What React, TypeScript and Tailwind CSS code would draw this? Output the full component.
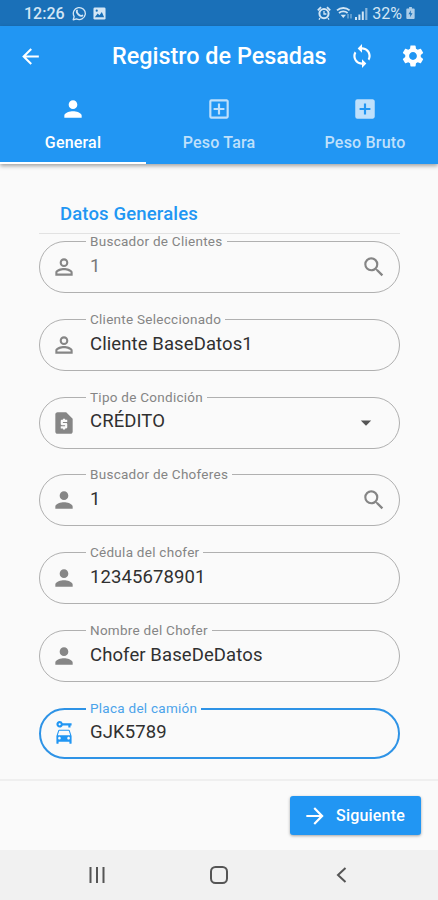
import type { IconType } from "react-icons";
import {
  MdAddBox,
  MdArrowBack,
  MdArrowDropDown,
  MdArrowForward,
  MdCarRental,
  MdOutlineAddBox,
  MdPerson,
  MdPersonOutline,
  MdRequestPage,
  MdSearch,
  MdSettings,
  MdSync,
} from "react-icons/md";

interface FieldProps {
  label: string;
  value: string;
  icon: IconType;
  trailing?: "search" | "dropdown";
  disabled?: boolean;
  focused?: boolean;
}

const fields: FieldProps[] = [
  { label: "Buscador de Clientes", value: "1", icon: MdPersonOutline, trailing: "search", disabled: true },
  { label: "Cliente Seleccionado", value: "Cliente BaseDatos1", icon: MdPersonOutline },
  { label: "Tipo de Condición", value: "CRÉDITO", icon: MdRequestPage, trailing: "dropdown" },
  { label: "Buscador de Choferes", value: "1", icon: MdPerson, trailing: "search" },
  { label: "Cédula del chofer", value: "12345678901", icon: MdPerson },
  { label: "Nombre del Chofer", value: "Chofer BaseDeDatos", icon: MdPerson },
  { label: "Placa del camión", value: "GJK5789", icon: MdCarRental, focused: true },
];

const tabs = [
  { label: "General", icon: MdPerson, active: true },
  { label: "Peso Tara", icon: MdOutlineAddBox, active: false },
  { label: "Peso Bruto", icon: MdAddBox, active: false },
];

function StatusBar() {
  return (
    <div className="flex h-[26px] items-center bg-[#1a70b8] pl-6 pr-[23px] text-[#d3e6f5]">
      <span className="pt-px text-[16px] font-medium leading-none">12:26</span>
      <svg className="ml-[7px] h-[15px] w-[15px]" viewBox="0 0 16 16" fill="none" stroke="currentColor">
        <path d="M1.3 14.7l1-3.4a6.4 6.4 0 112.5 2.4z" strokeWidth="1.4" strokeLinejoin="round" />
        <path d="M5.4 4.7c-.8 1.4 0 3 1.5 4.4 1.5 1.3 3 2 4.2 1.1" strokeWidth="1.9" strokeLinecap="round" />
      </svg>
      <svg className="ml-[6px] h-[13px] w-[13px]" viewBox="0 0 14 14">
        <rect x=".5" y=".5" width="13" height="13" rx="1.5" fill="currentColor" />
        <path d="M2 11l3-4 2 2 2.5-3.5L12 11z" fill="#1a70b8" />
        <circle cx="4" cy="4" r="1.2" fill="#1a70b8" />
      </svg>
      <svg className="ml-auto h-[14px] w-[14px]" viewBox="0 0 14 14" fill="none" stroke="currentColor">
        <circle cx="7" cy="7.6" r="4.6" strokeWidth="2" />
        <path d="M7 5v3h2.4M3 12l-1 1.6M11 12l1 1.6" strokeWidth="1.3" />
        <path d="M.8 4.4L4 1.2M13.2 4.4L10 1.2" strokeWidth="1.8" />
      </svg>
      <svg className="ml-[5px] h-[14px] w-[17px]" viewBox="0 0 17 14" fill="none" stroke="currentColor">
        <path d="M1 4.4a9.4 9.4 0 0112.6 0" strokeWidth="1.8" />
        <path d="M3 7a6.4 6.4 0 018.6 0" strokeWidth="1.7" />
        <path d="M4.6 8.7h5.4L7.3 12z" fill="currentColor" stroke="none" />
        <path d="M12 8v4.5M15 8v4.5" strokeWidth="1.2" opacity=".6" />
      </svg>
      <svg className="ml-[2px] h-[13px] w-[13px]" viewBox="0 0 13 13" fill="currentColor">
        <path d="M0 10h2v3H0zM3.4 7.5h2V13h-2zM6.8 4.5h2V13h-2z" />
        <path d="M10.2 1h2.2v12h-2.2z" opacity=".6" />
      </svg>
      <span className="ml-[4px] pt-px text-[16px] leading-none">32%</span>
      <svg className="ml-[4px] h-[12px] w-[9px]" viewBox="0 0 9 13">
        <path d="M3 0h3v1.5h2a1 1 0 011 1V12a1 1 0 01-1 1H1a1 1 0 01-1-1V2.500a1 1 0 011-1h2z" fill="currentColor" opacity=".8" />
        <path d="M5 3.500L2.300 7.800h2L4 11l2.700-4.300h-2z" fill="#1a70b8" />
      </svg>
    </div>
  );
}

function AppBar() {
  return (
    <header className="relative z-10 h-[138px] bg-[#2196f3] text-white shadow-[0_2px_4px_rgba(0,0,0,0.35)]">
      <div className="flex h-[60px] items-center pl-[18px] pr-[12.5px]">
        <MdArrowBack className="size-[25px]" />
        <h1 className="ml-[69px] flex-1 whitespace-nowrap pt-px text-[23.4px] font-medium leading-none">
          Registro de Pesadas
        </h1>
        <MdSync className="size-[26px]" />
        <MdSettings className="ml-[25px] size-[26px]" />
      </div>
      <nav className="grid h-[78px] grid-cols-3">
        {tabs.map(({ label, icon: Icon, active }) => (
          <div
            key={label}
            className={
              active
                ? "flex flex-col items-center border-b-2 border-white pt-[10px]"
                : "flex flex-col items-center pt-[10px] text-[#bfe0fb]"
            }
          >
            <Icon className="size-[26px]" />
            <span className="mt-[13px] text-[16px] font-medium leading-[16px] tracking-[0.2px]">
              {label}
            </span>
          </div>
        ))}
      </nav>
    </header>
  );
}

function Field({ label, value, icon: Icon, trailing, disabled, focused }: FieldProps) {
  return (
    <div
      className={
        focused
          ? "relative flex h-[51px] items-center rounded-full border-2 border-[#2e93e6] pl-[10px] pr-3"
          : "relative flex h-[52px] items-center rounded-full border border-[#b0b0b0] pl-[11px] pr-3"
      }
    >
      <span
        className={
          focused
            ? "absolute -top-[8px] left-[45px] bg-[#fafafa] px-1 text-[13.5px] leading-[12px] tracking-[0.27px] text-[#4ba3ea]"
            : "absolute -top-[7px] left-[46px] bg-[#fafafa] px-1 text-[13.5px] leading-[12px] tracking-[0.27px] text-[#858585]"
        }
      >
        {label}
      </span>
      <Icon className={focused ? "size-[26px] text-[#2196f3]" : "size-[26px] text-[#868686]"} />
      <span
        className={
          disabled
            ? "ml-[13px] flex-1 pb-[2px] text-[18.5px] leading-none tracking-[0.1px] text-[#777]"
            : "ml-[13px] flex-1 pb-[2px] text-[18.5px] leading-none tracking-[0.1px] text-[#303030]"
        }
      >
        {value}
      </span>
      {trailing === "search" && <MdSearch className="size-[26px] text-[#858585]" />}
      {trailing === "dropdown" && <MdArrowDropDown className="mr-2 size-[26px] pb-px text-[#555]" />}
    </div>
  );
}

function NavBar() {
  return (
    <div className="grid h-[50px] grid-cols-[195px_48px_195px] items-center bg-[#f1f1f1] text-[#555]">
      <svg className="ml-[88px] h-4 w-[18px]" viewBox="0 0 18 16" stroke="currentColor" strokeWidth="2">
        <path d="M2.500 0v16M9 0v16M15.500 0v16" />
      </svg>
      <svg className="mx-auto size-[18px]" viewBox="0 0 18 18" fill="none" stroke="currentColor" strokeWidth="2">
        <rect x="1" y="1" width="16" height="16" rx="4.500" />
      </svg>
      <svg className="ml-[93px] h-4 w-[11px]" viewBox="0 0 11 16" fill="none" stroke="currentColor" strokeWidth="2">
        <path d="M9.500 1L2 8l7.500 7" />
      </svg>
    </div>
  );
}

export default function App() {
  return (
    <div className="flex h-[900px] w-[438px] flex-col overflow-hidden bg-[#fafafa] font-['Roboto',sans-serif]">
      <StatusBar />
      <AppBar />
      <main className="flex-1 pl-[39px] pr-[38px] pt-[39px]">
        <h2 className="h-[31px] border-b border-[#e2e2e2] pl-[21px] text-[18.5px] font-medium leading-[22px] tracking-[0.15px] text-[#2196f3]">
          Datos Generales
        </h2>
        <div className="mt-[7px] flex flex-col gap-[25.8px]">
          {fields.map((field) => (
            <Field key={field.label} {...field} />
          ))}
        </div>
      </main>
      <footer className="flex h-[71px] justify-end border-t-2 border-[#efefef] pr-[17px] pt-[15px]">
        <button className="flex h-[39px] w-[131px] items-center rounded-[3px] bg-[#2196f3] pl-[12px] text-white shadow-[0_1px_3px_rgba(0,0,0,0.35)]">
          <MdArrowForward className="size-[26px]" />
          <span className="ml-[8px] text-[16px] font-medium tracking-[0.2px]">Siguiente</span>
        </button>
      </footer>
      <NavBar />
    </div>
  );
}
